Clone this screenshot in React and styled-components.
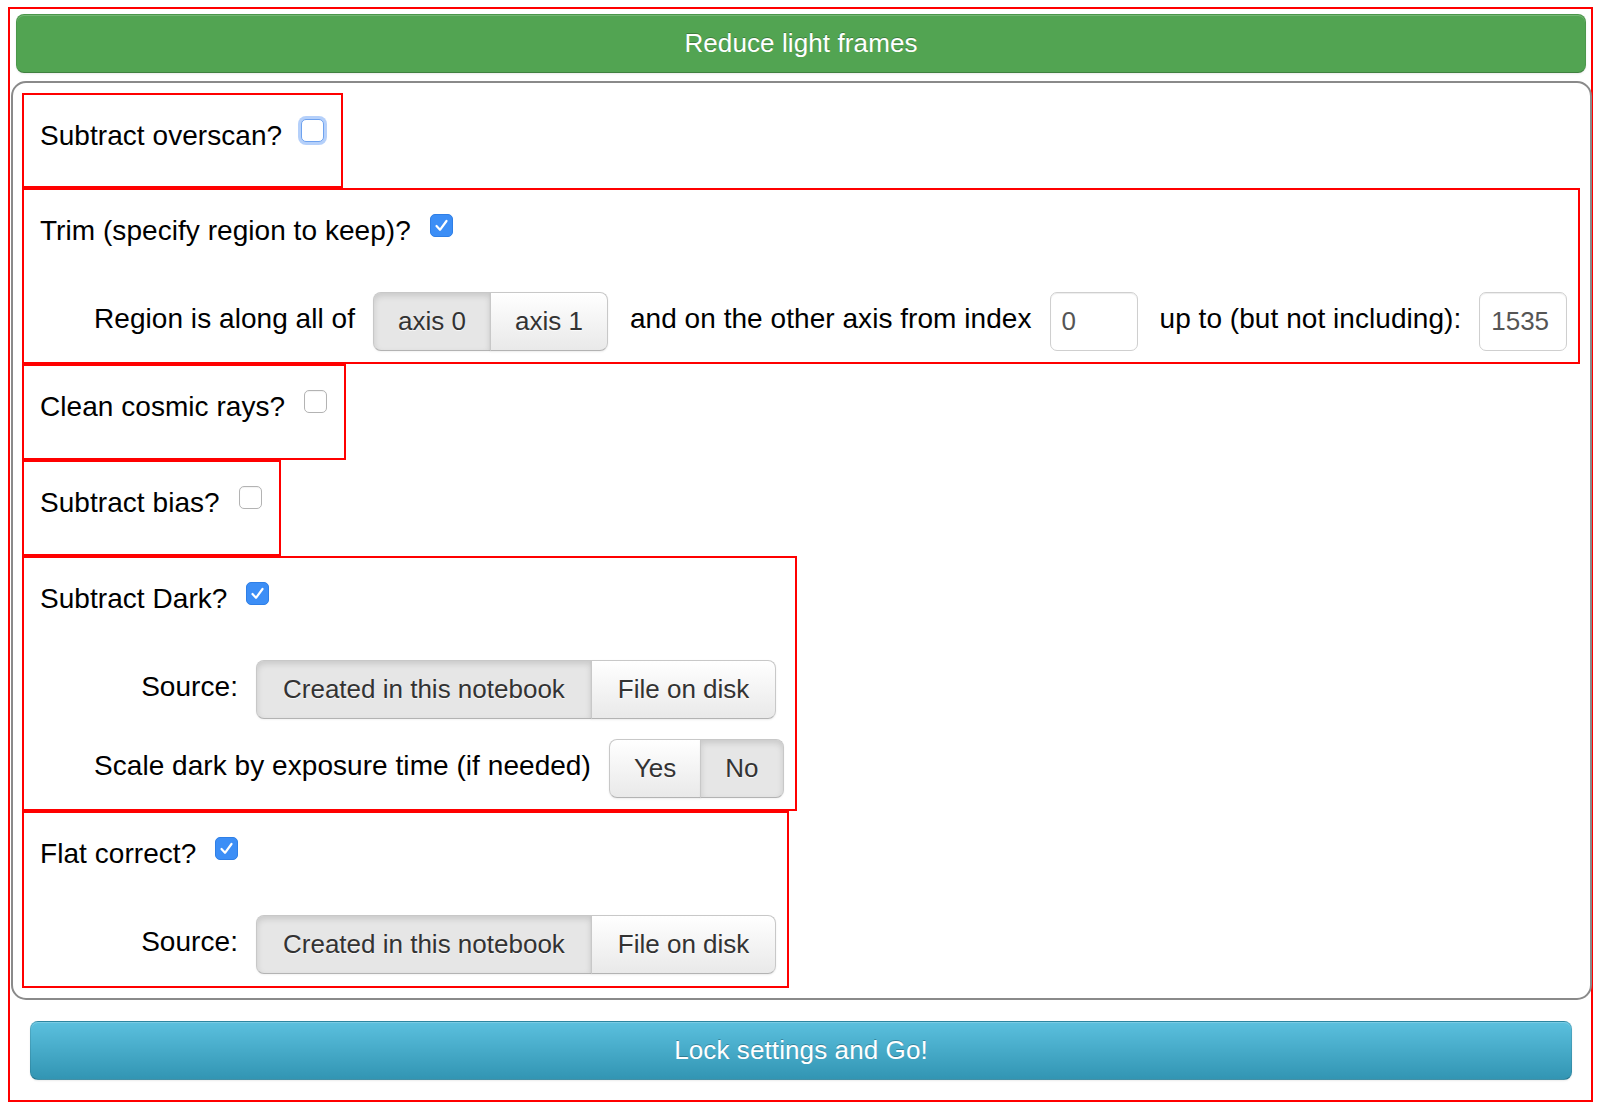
import React from "react";
import styled, { createGlobalStyle, css } from "styled-components";

const GlobalStyle = createGlobalStyle`
  html, body {
    margin: 0;
    padding: 0;
    background: #ffffff;
  }
  body {
    font-family: "Liberation Sans", Arial, Helvetica, sans-serif;
    color: #000;
  }
  * { box-sizing: border-box; }
`;

const Frame = styled.div`
  margin: 7px 0 0 8px;
  width: 1585px;
  border: 2px solid #ff0000;
  padding: 5px 0 20px 0;
  display: flex;
  flex-direction: column;
`;

const variants = {
  success: css`
    background: #52a452;
    border: 1px solid rgba(0, 0, 0, 0.08);
    border-bottom-color: rgba(0, 0, 0, 0.22);
    margin: 0 5px 0 6px;
  `,
  info: css`
    background: linear-gradient(to bottom, #5bc0de, #3295b3);
    border: 1px solid rgba(0, 0, 0, 0.1);
    border-bottom-color: rgba(0, 0, 0, 0.25);
    margin: 21px 19px 0 20px;
  `,
};

const ActionButton = styled.button`
  height: 59px;
  border-radius: 8px;
  color: #fff;
  font-family: "Liberation Sans", Arial, Helvetica, sans-serif;
  font-size: 26px;
  letter-spacing: 0.1px;
  text-shadow: 0 -1px 0 rgba(0, 0, 0, 0.25);
  box-shadow: inset 0 1px 0 rgba(255, 255, 255, 0.2), 0 1px 2px rgba(0, 0, 0, 0.08);
  padding: 0;
  cursor: pointer;
  ${(p) => variants[p.$variant]}
`;

const Panel = styled.div`
  margin: 8px -1px 0 1px;
  border: 2px solid #8a8a8a;
  border-radius: 15px;
  padding: 10px 9px 10px;
  display: flex;
  flex-direction: column;
  align-items: flex-start;
`;

const Section = styled.div`
  border: 2px solid #ff0000;
  padding: 21px 11px ${(p) => p.$pb}px 16px;
  display: flex;
  flex-direction: column;
  font-size: 28px;
  letter-spacing: 0.05px;
`;

const TitleRow = styled.div`
  display: flex;
  align-items: flex-start;
  line-height: 40px;
  height: 40px;
  padding-right: 6px;
  white-space: nowrap;
`;

const SubRow = styled.div`
  display: flex;
  align-items: center;
  height: 59px;
  padding-left: 32px;
  margin-top: ${(p) => p.$gap}px;
  white-space: nowrap;
`;

const FieldLabel = styled.span`
  min-width: 144px;
  text-align: right;
  margin: 0 18px 0 22px;
  padding-bottom: 6px;
  line-height: 32px;
`;

const Box = styled.span`
  position: relative;
  flex: none;
  width: 23px;
  height: 23px;
  margin: 3px 0 0 19px;
  border-radius: 5px;
  display: flex;
  align-items: center;
  justify-content: center;
  ${(p) =>
    p.$checked
      ? css`
          background: #3c8ef6;
          border: 1px solid #2f7fe6;
        `
      : css`
          background: #fff;
          border: 1px solid ${p.$focused ? "#6ea2ef" : "#b3b3b3"};
          box-shadow: ${p.$focused
            ? "0 0 0 3px rgba(120, 170, 245, 0.55)"
            : "inset 0 1px 1px rgba(0,0,0,0.05)"};
        `}
`;

const Checkbox = ({ checked, focused }) => (
  <Box $checked={checked} $focused={focused}>
    {checked && (
      <svg width="17" height="17" viewBox="0 0 17 17">
        <polyline
          points="3.5,9 7,12.8 13.5,4"
          fill="none"
          stroke="#fff"
          strokeWidth="2.2"
          strokeLinecap="round"
          strokeLinejoin="round"
        />
      </svg>
    )}
  </Box>
);

const ButtonGroup = styled.div`
  display: flex;
  height: 59px;
  flex: none;
`;

const ToggleButton = styled.button`
  font-family: "Liberation Sans", Arial, Helvetica, sans-serif;
  font-size: 26px;
  color: #333;
  height: 59px;
  padding: 0 ${(p) => p.$pad}px;
  margin: 0;
  border: 1px solid #c8c8c8;
  border-bottom-color: #b3b3b3;
  text-shadow: 0 1px 1px rgba(255, 255, 255, 0.75);
  white-space: nowrap;
  cursor: pointer;
  & + & {
    margin-left: -1px;
  }
  &:first-child {
    border-radius: 8px 0 0 8px;
  }
  &:last-child {
    border-radius: 0 8px 8px 0;
  }
  ${(p) =>
    p.$active
      ? css`
          background: #e6e6e6;
          box-shadow: inset 0 3px 6px rgba(0, 0, 0, 0.13), 0 1px 2px rgba(0, 0, 0, 0.05);
        `
      : css`
          background: linear-gradient(to bottom, #ffffff, #e9e9e9);
          box-shadow: inset 0 1px 0 rgba(255, 255, 255, 0.2), 0 1px 2px rgba(0, 0, 0, 0.08);
        `}
`;

const NumberField = styled.input`
  width: 88px;
  height: 59px;
  flex: none;
  font-family: "Liberation Sans", Arial, Helvetica, sans-serif;
  font-size: 26px;
  color: #555;
  padding: 0 11px;
  border: 1px solid #cfcfcf;
  border-radius: 7px;
  box-shadow: inset 0 1px 1px rgba(0, 0, 0, 0.075);
  background: #fff;
  outline: none;
`;

const Toggle = ({ options, active, pad = 26 }) => (
  <ButtonGroup>
    {options.map((o) => (
      <ToggleButton key={o} $active={o === active} $pad={pad}>
        {o}
      </ToggleButton>
    ))}
  </ButtonGroup>
);

export default function App() {
  return (
    <>
      <GlobalStyle />
      <Frame>
        <ActionButton $variant="success">Reduce light frames</ActionButton>
        <Panel>
          <Section $pb={30}>
            <TitleRow>
              Subtract overscan?
              <Checkbox focused />
            </TitleRow>
          </Section>

          <Section $pb={11}>
            <TitleRow>
              Trim (specify region to keep)?
              <Checkbox checked />
            </TitleRow>
            <SubRow $gap={41}>
              <FieldLabel>Region is along all of</FieldLabel>
              <Toggle options={["axis 0", "axis 1"]} active="axis 0" pad={24} />
              <FieldLabel>and on the other axis from index</FieldLabel>
              <NumberField readOnly value="0" />
              <FieldLabel>up to (but not including):</FieldLabel>
              <NumberField readOnly value="1535" />
            </SubRow>
          </Section>

          <Section $pb={31}>
            <TitleRow>
              Clean cosmic rays?
              <Checkbox />
            </TitleRow>
          </Section>

          <Section $pb={31}>
            <TitleRow>
              Subtract bias?
              <Checkbox />
            </TitleRow>
          </Section>

          <Section $pb={11}>
            <TitleRow>
              Subtract Dark?
              <Checkbox checked />
            </TitleRow>
            <SubRow $gap={41}>
              <FieldLabel>Source:</FieldLabel>
              <Toggle
                options={["Created in this notebook", "File on disk"]}
                active="Created in this notebook"
              />
            </SubRow>
            <SubRow $gap={20}>
              <FieldLabel>Scale dark by exposure time (if needed)</FieldLabel>
              <Toggle options={["Yes", "No"]} active="No" pad={24} />
            </SubRow>
          </Section>

          <Section $pb={12}>
            <TitleRow>
              Flat correct?
              <Checkbox checked />
            </TitleRow>
            <SubRow $gap={41}>
              <FieldLabel>Source:</FieldLabel>
              <Toggle
                options={["Created in this notebook", "File on disk"]}
                active="Created in this notebook"
              />
            </SubRow>
          </Section>
        </Panel>
        <ActionButton $variant="info">Lock settings and Go!</ActionButton>
      </Frame>
    </>
  );
}
